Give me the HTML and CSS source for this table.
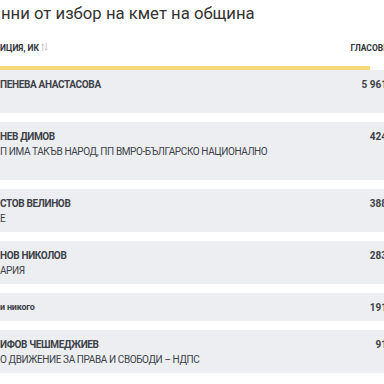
FILE: index.html
```html
<!DOCTYPE html>
<html lang="bg">
<head>
<meta charset="utf-8">
<link rel="stylesheet" href="styles.css">
</head>
<body>
<div class="page">
  <h1 class="title">нни от избор на кмет на община</h1>
  <div class="table">
    <div class="thead">
      <span class="th">ИЦИЯ, ИК<svg class="sort" width="7" height="8" viewBox="0 0 7 8"><path d="M1.8 8V1M0.5 2.3L1.8 0.8L3.1 2.3M5.2 0v7M3.9 5.7L5.2 7.2L6.5 5.7" fill="none" stroke="#b5b9bf" stroke-width="0.8"/></svg></span>
      <span class="th th-num">ГЛАСОВЕ</span>
    </div>
    <div class="bar"></div>
    <div class="rows">
      <div class="row">
        <div class="cand"><div class="name">ПЕНЕВА АНАСТАСОВА</div><div class="party">&nbsp;</div></div>
        <div class="votes">5 961</div>
      </div>
      <div class="row">
        <div class="cand"><div class="name">НЕВ ДИМОВ</div><div class="party">П ИМА ТАКЪВ НАРОД, ПП ВМРО-БЪЛГАРСКО НАЦИОНАЛНО</div><div class="party">&nbsp;</div></div>
        <div class="votes">424</div>
      </div>
      <div class="row">
        <div class="cand"><div class="name">СТОВ ВЕЛИНОВ</div><div class="party">Е</div></div>
        <div class="votes">388</div>
      </div>
      <div class="row">
        <div class="cand"><div class="name">НОВ НИКОЛОВ</div><div class="party">АРИЯ</div></div>
        <div class="votes">283</div>
      </div>
      <div class="row">
        <div class="cand"><div class="name name-small">и никого</div></div>
        <div class="votes">191</div>
      </div>
      <div class="row">
        <div class="cand"><div class="name">ИФОВ ЧЕШМЕДЖИЕВ</div><div class="party">О ДВИЖЕНИЕ ЗА ПРАВА И СВОБОДИ – НДПС</div></div>
        <div class="votes">91</div>
      </div>
    </div>
  </div>
</div>
</body>
</html>
```
FILE: styles.css
```css
html, body {
  margin: 0;
  padding: 0;
  background: #ffffff;
  overflow: hidden;
}
.page {
  width: 388px;
  font-family: Roboto, "Noto Sans", sans-serif;
  color: #3d4249;
}
.title {
  margin: 0;
  padding: 4px 0 0 1px;
  font-size: 16.7px;
  font-weight: 400;
  line-height: 20px;
  color: #333333;
}
.table {
  margin-top: 17px;
}
.thead {
  display: flex;
  justify-content: space-between;
  align-items: center;
  height: 14px;
  padding-bottom: 11px;
}
.th {
  font-size: 8.5px;
  font-weight: 700;
  color: #2f3338;
  display: flex;
  align-items: center;
  gap: 2px;
}
.sort {
  display: block;
  margin-top: -2px;
}
.bar {
  width: 370px;
  height: 4px;
  background: #f7d97a;
}
.rows {
  display: flex;
  flex-direction: column;
  gap: 9px;
}
.row {
  display: flex;
  justify-content: space-between;
  align-items: flex-start;
  background: #eceef1;
  padding: 7px 0 6px;
}
.name {
  font-size: 10px;
  font-weight: 700;
  line-height: 15px;
  letter-spacing: -0.35px;
  color: #3d4249;
}
.name-small {
  font-size: 9px;
  letter-spacing: -0.2px;
}
.party {
  font-size: 10px;
  font-weight: 400;
  line-height: 15px;
  letter-spacing: -0.4px;
  color: #3d4249;
}
.votes {
  font-size: 10px;
  font-weight: 700;
  line-height: 15px;
  color: #3d4249;
  padding-right: 1px;
}
```
